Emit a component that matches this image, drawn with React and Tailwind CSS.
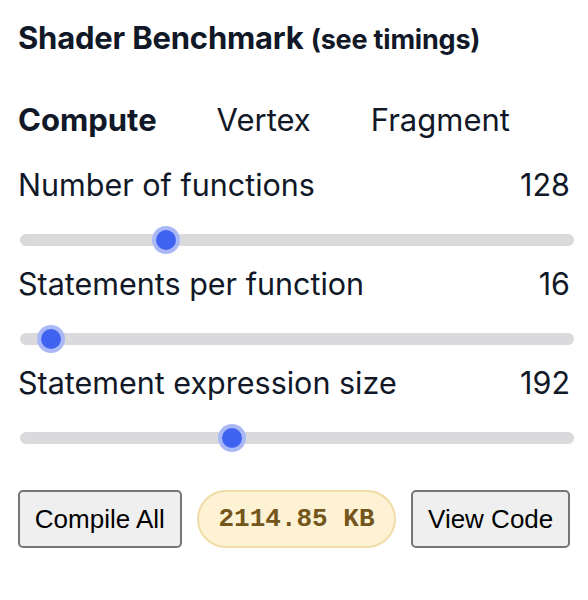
import React, { useState } from "react";

const sliders = [
  { label: "Number of functions", value: 128, pos: 146 },
  { label: "Statements per function", value: 16, pos: 31 },
  { label: "Statement expression size", value: 192, pos: 212 },
];

const Slider = ({ pos }) => (
  <div className="relative h-[38px] w-[554px] ml-[2px] flex items-center">
    <div className="h-[12px] w-full rounded-full bg-[#dadadd]" />
    <div
      className="absolute top-1/2 -translate-y-1/2 w-[28px] h-[28px] rounded-full bg-[#aab8f6] flex items-center justify-center"
      style={{ left: pos - 14 }}
    >
      <div className="w-[20px] h-[20px] rounded-full bg-[#3f63f0]" />
    </div>
  </div>
);

export default function App() {
  const [tab, setTab] = useState("Compute");

  return (
    <div
      className="w-[588px] h-[600px] bg-white text-[#111827] pl-[18px] pr-[18px] pt-[20px]"
      style={{ fontFamily: "Inter, 'Noto Sans', sans-serif" }}
    >
      <h1 className="text-[31px] font-bold leading-[36px] tracking-[-0.2px]">
        Shader Benchmark <span className="text-[27px]">(see timings)</span>
      </h1>

      <div className="flex gap-[60px] mt-[44px] text-[31px] leading-[36px]">
        {["Compute", "Vertex", "Fragment"].map((t) => (
          <button
            key={t}
            onClick={() => setTab(t)}
            className={tab === t ? "font-bold" : "font-normal"}
          >
            {t}
          </button>
        ))}
      </div>

      <div className="mt-[29px]">
        {sliders.map((s) => (
          <div key={s.label} className="mb-[7px]">
            <div className="flex justify-between items-center text-[30.5px] leading-[36px]">
              <span>{s.label}</span>
              <span>{s.value}</span>
            </div>
            <div className="mt-[18px]">
              <Slider pos={s.pos} />
            </div>
          </div>
        ))}
      </div>

      <div
        className="flex items-center gap-[15px] mt-[33px] text-black"
        style={{ fontFamily: "'Liberation Sans', Arial, sans-serif" }}
      >
        <button className="h-[58px] w-[164px] bg-[#efefef] border-2 border-[#767676] rounded-[5px] text-[26px]">
          Compile All
        </button>
        <div
          className="h-[58px] w-[200px] rounded-full bg-[#fdf3d4] border-2 border-[#f0dca6] flex items-center justify-center text-[26px] font-bold text-[#74561c]"
          style={{ fontFamily: "'Liberation Mono', 'DejaVu Sans Mono', monospace" }}
        >
          2114.85 KB
        </div>
        <button className="h-[58px] w-[159px] bg-[#efefef] border-2 border-[#767676] rounded-[5px] text-[26px]">
          View Code
        </button>
      </div>
    </div>
  );
}
